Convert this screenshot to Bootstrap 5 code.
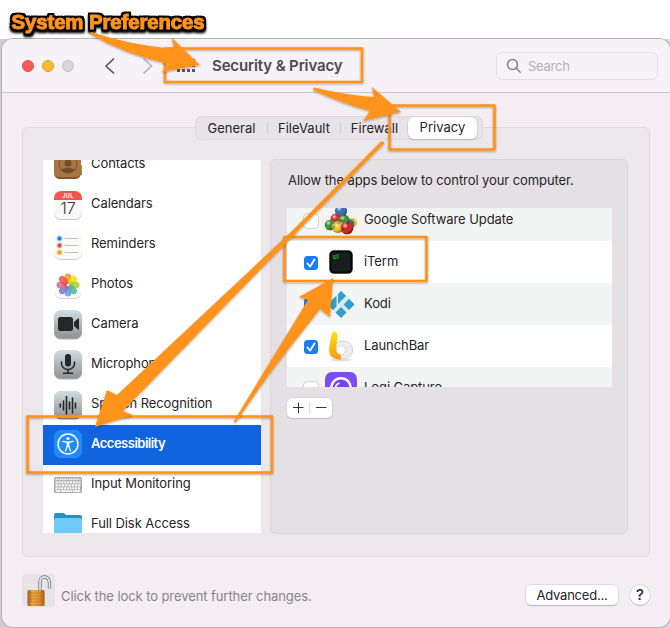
<!DOCTYPE html>
<html lang="en">
<head>
<meta charset="utf-8">
<title>Security &amp; Privacy</title>
<link href="https://cdn.jsdelivr.net/npm/bootstrap@5.3.0/dist/css/bootstrap.min.css" rel="stylesheet">
<style>
body{width:670px;height:628px;overflow:hidden;background:#fff;font-family:Inter,"Liberation Sans",sans-serif;font-size:13px;line-height:20px;letter-spacing:-.08px;color:#252427}
.caption-bar{height:39px}
.backdrop{height:589px;background:linear-gradient(90deg,#cfcdd2 0 50%,#d8d6da);padding-left:2px}
.mac-window{height:588px;background:#f4eef3;border-radius:11px;overflow:hidden;box-shadow:0 0 0 1px #b5b2b6}
.titlebar{height:54px;background:#f7f1f8;border-bottom:1px solid #cbc7cc;padding-left:20px;padding-right:12px}
.light{width:12px;height:12px;border-radius:50%;border:1px solid}
.light.red{background:#fb5b57;border-color:#e2504c}
.light.amber{background:#fcba2d;border-color:#e0a024}
.light.off{background:#d9d4da;border-color:#c5c0c6}
.title-text{font-size:15px;font-weight:600;color:#4d4a4f;letter-spacing:-.13px}
.search-box{width:162px;height:28px;border:1px solid #e4dfe5;border-radius:6px;color:#b6b1b7;letter-spacing:-.25px}
.search-box svg{margin-right:4px;margin-left:1px}
.pane{width:628px}
.tabs{height:22px;width:286px;background:#e8e3e8;border-radius:6px;box-shadow:0 0 0 1px #dfdadf;margin-left:174px;letter-spacing:.03px}
.tabs .sep{width:1px;height:12px;background:#cfcacf}
.tab-a{width:71px}.tab-b{width:72px}.tab-c{width:67px}
.tab-on{background:#fff;border-radius:6px;height:22px;width:69px;box-shadow:0 0 0 .5px #c9c5c9,0 1px 1px #aaa5aa}
.outer-panel{height:430px;margin-top:-12px;background:#ece7eb;border:1px solid #e0dbe0;border-radius:5px;padding:31px 21px 0 20px}
.side-list{width:218px;height:373px;background:#fff;overflow:hidden;margin-top:1px}
.side-row{height:40px;padding-left:10px;gap:8px;flex-shrink:0}
.side-row:first-child{margin-top:-15px}
.side-row svg{width:30px;height:30px;flex-shrink:0}
.side-row span{margin-top:-5px}
.side-row.on{background:#1064e0;color:#fff;font-weight:600;letter-spacing:-.5px}
.right-panel{width:358px;height:375px;background:#e5e0e4;border:1px solid #dad5d9;border-radius:5px;padding:10px 16px 0 16px}
.allow{padding-left:1px}
.app-list{width:325px;height:179px;overflow:hidden;background:#fff;margin-top:18px}
.app-row{height:42px;flex-shrink:0;padding-left:17px}
.app-row:first-child{margin-top:-9px}
.app-row:nth-child(odd){background:#f3f5f4}
.app-row svg{width:34px;height:34px;flex-shrink:0;margin-left:6px;margin-right:6px}
.app-row span{margin-top:-3px}
.tick{width:14px;height:14px;border-radius:3.5px;margin-top:1px;background:#fff;box-shadow:0 0 0 .6px #b9b9b9;flex-shrink:0}
.tick.yes{background:#1a7df8;box-shadow:none}
.app-row .tick svg{width:14px;height:14px;margin:0;display:block}
.pm{width:45px;height:20px;background:#fff;border-radius:5px;box-shadow:0 0 0 .5px #ccc6cb,0 1px 1px #b9b3b8;margin-top:11px}
footer{padding-top:17px}
.lock-box{width:33px;height:33px;background:#e8e3e8;border-radius:4px}
.hint{color:#87838a;padding:11px 0 0 6px}
.adv{width:92px;height:20px;background:#fff;border-radius:5px;box-shadow:0 0 0 .5px #ccc6cb,0 1px 1px #b3aeb2;letter-spacing:-.2px}
.help{width:20px;height:20px;border-radius:50%;background:#fff;box-shadow:0 0 0 .5px #ccc6cb,0 1px 1px #b3aeb2;font-size:15px;font-weight:500;margin-left:12px}
.marks{left:0;top:0;pointer-events:none}
</style>
<script src="https://cdn.jsdelivr.net/npm/bootstrap@5.3.0/dist/js/bootstrap.bundle.min.js"></script>
</head>
<body class="position-relative">
<div class="caption-bar"></div>
<div class="backdrop">
<main class="mac-window">
  <header class="titlebar d-flex align-items-center">
    <div class="d-flex gap-2">
      <i class="light red"></i><i class="light amber"></i><i class="light off"></i>
    </div>
    <svg class="ms-4" width="62" height="18" viewBox="0 0 62 18" fill="none" stroke-width="1.600" stroke-linecap="round" stroke-linejoin="round"><path d="M15.500 2 8 9l7.500 7" stroke="#514e53"/><path d="M46 2l7.500 7-7.500 7" stroke="#b4afb5"/></svg>
    <svg class="ms-3" width="20" height="18" viewBox="0 0 20 18" fill="#58555a"><g id="g"><path d="M1 2h3v3H1zM6 2h3v3H6zM11 2h3v3h-3zM16 2h3v3h-3z"/></g><use href="#g" y="5"/><use href="#g" y="10"/></svg>
    <div class="title-text ms-3 flex-grow-1">Security &amp; Privacy</div>
    <div class="search-box d-flex align-items-center ps-2">
      <svg width="18" height="16" viewBox="0 0 18 16" fill="none" stroke="#858086" stroke-width="1.500" stroke-linecap="round"><circle cx="6.500" cy="6.500" r="5"/><path d="M10.200 10.200l4 4"/></svg>Search
    </div>
  </header>
  <section class="pane pt-4 mx-auto">
    <div class="tabs d-flex align-items-center position-relative">
      <div class="text-center tab-a">General</div><i class="sep"></i>
      <div class="text-center tab-b">FileVault</div><i class="sep"></i>
      <div class="text-center tab-c">Firewall</div>
      <div class="tab-on text-center">Privacy</div>
    </div>
    <div class="outer-panel d-flex justify-content-between">
      <div class="side-list d-flex flex-column">
        <div class="side-row d-flex align-items-center"><svg viewBox="0 0 30 30"><path d="M27 4h2v5h-2z" fill="#6bbcf0"/><path d="M27 15h2v5h-2z" fill="#f38b1d"/><path d="M27 20h2v5h-2z" fill="#50b548"/><rect x="1" y="1" width="27" height="28" rx="6" fill="#a87542"/><path d="M1 22v1a6 6 0 006 6h15a6 6 0 006-6v-1q0 5-6 5H7q-6 0-6-5" fill="#83552b"/><circle cx="15" cy="14" r="9" fill="none" stroke="#70502f"/><circle cx="15" cy="13" r="3.500" fill="#70502f"/><path d="M8 20q7-5 14 0-7 5-14 0" fill="#70502f"/></svg><span>Contacts</span></div>
        <div class="side-row d-flex align-items-center"><svg viewBox="0 0 30 30"><rect x="1" y="2" width="28" height="28" rx="7" fill="#c9c9c9"/><rect x="1" y="1" width="28" height="28" rx="7" fill="#f8f8f7"/><path d="M1 10V8a7 7 0 017-7h14a7 7 0 017 7v2z" fill="#f4554e"/><text x="15" y="8.300" text-anchor="middle" font-size="5.500" font-weight="700" fill="#fff" font-family="Inter,sans-serif" letter-spacing=".4">JUL</text><text x="15" y="24" text-anchor="middle" font-size="16" font-weight="300" fill="#333" font-family="Inter,sans-serif">17</text></svg><span>Calendars</span></div>
        <div class="side-row d-flex align-items-center"><svg viewBox="0 0 30 30"><rect x="1" y="2" width="28" height="28" rx="7" fill="#cfcfcf"/><rect x="1" y="1" width="28" height="28" rx="7" fill="#fbfbfa"/><path d="M11.500 8.500h14M11.500 15.500h14M11.500 22.500h14" stroke="#c3c3c5"/><g fill="none" stroke-width="1.300"><circle cx="6.500" cy="8.500" r="2.300" stroke="#a8d2fb"/><circle cx="6.500" cy="15.500" r="2.300" stroke="#f8b3ae"/><circle cx="6.500" cy="22.500" r="2.300" stroke="#fbd49a"/></g><circle cx="6.500" cy="8.500" r="1.900" fill="#147efb"/><circle cx="6.500" cy="15.500" r="1.900" fill="#ee453d"/><circle cx="6.500" cy="22.500" r="1.900" fill="#fd9d1c"/></svg><span>Reminders</span></div>
        <div class="side-row d-flex align-items-center"><svg viewBox="0 0 30 30"><rect x="2" y="3" width="26" height="26" rx="6" fill="#cfcfcf"/><rect x="2" y="2" width="26" height="26" rx="6" fill="#fdfdfd"/><g transform="translate(15 15)" fill-opacity=".85"><rect x="-3.300" y="-11.500" width="6.600" height="10.500" rx="3.300" fill="#fc981c"/><rect x="-3.300" y="-11.500" width="6.600" height="10.500" rx="3.300" fill="#f1dd0b" transform="rotate(45)"/><rect x="-3.300" y="-11.500" width="6.600" height="10.500" rx="3.300" fill="#a3cf3a" transform="rotate(90)"/><rect x="-3.300" y="-11.500" width="6.600" height="10.500" rx="3.300" fill="#4eb884" transform="rotate(135)"/><rect x="-3.300" y="-11.500" width="6.600" height="10.500" rx="3.300" fill="#5d9fe0" transform="rotate(180)"/><rect x="-3.300" y="-11.500" width="6.600" height="10.500" rx="3.300" fill="#8a70c0" transform="rotate(225)"/><rect x="-3.300" y="-11.500" width="6.600" height="10.500" rx="3.300" fill="#cf6699" transform="rotate(270)"/><rect x="-3.300" y="-11.500" width="6.600" height="10.500" rx="3.300" fill="#f0503c" transform="rotate(315)"/></g></svg><span>Photos</span></div>
        <div class="side-row d-flex align-items-center"><svg viewBox="0 0 30 30"><defs><linearGradient id="gy" x2="0" y2="1"><stop stop-color="#cfdee5"/><stop offset="1" stop-color="#929190"/></linearGradient></defs><rect x="1" y="1.500" width="28" height="28" rx="6.500" fill="#aaa"/><rect x="1" y="0" width="28" height="28" rx="6.500" fill="url(#gy)"/><rect x="5" y="7" width="15" height="14" rx="2.500" fill="#252628"/><path d="M21 12l4-3.500q1-.5 1 .5v10q0 1-1 .5L21 16z" fill="#252628"/></svg><span>Camera</span></div>
        <div class="side-row d-flex align-items-center"><svg viewBox="0 0 30 30"><rect x="1" y="1.500" width="28" height="28" rx="6.500" fill="#aaa"/><rect x="1" y="0" width="28" height="28" rx="6.500" fill="url(#gy)"/><rect x="12" y="4" width="6" height="12.500" rx="3" fill="#252628"/><path d="M8.500 12v1.500a6.500 6 0 0013 0V12M15 19.500V23M10.500 23.300h9" stroke="#252628" stroke-width="1.600" fill="none" stroke-linecap="round"/></svg><span>Microphone</span></div>
        <div class="side-row d-flex align-items-center"><svg viewBox="0 0 30 30"><rect x="1" y="1.500" width="28" height="28" rx="6.500" fill="#aaa"/><rect x="1" y="1" width="28" height="28" rx="6.500" fill="url(#gy)"/><path d="M7.300 14v3M10.500 11v9M13.500 6.500V24M16.500 12v7M19.500 8v15M22.500 13v5" stroke="#252628" stroke-width="1.600" stroke-linecap="round"/></svg><span>Speech Recognition</span></div>
        <div class="side-row on d-flex align-items-center"><svg viewBox="0 0 30 30"><rect x="1" y="0" width="28" height="28" rx="6.500" fill="#1f8bfd"/><circle cx="15" cy="14" r="10" fill="none" stroke="#fff" stroke-width="1.500"/><circle cx="15" cy="8.600" r="1.500" fill="#fff"/><path d="M9.800 11.300l3.700.8h3l3.700-.8M14.200 12.300v4L12.500 21M15.800 12.300v4L17.500 21M15 12v4.500" stroke="#fff" stroke-width="1.200" fill="none" stroke-linecap="round" stroke-linejoin="round"/></svg><span>Accessibility</span></div>
        <div class="side-row d-flex align-items-center"><svg viewBox="0 0 30 30"><rect x="1" y="7" width="28" height="16" rx="1.500" fill="#aaa9a9"/><path d="M2.500 9.300h25" stroke="#f7f7f7" stroke-width="1.800" stroke-dasharray="1.600 .6"/><path d="M2.500 12.300h25" stroke="#f7f7f7" stroke-width="2.200" stroke-dasharray="2.200 .7"/><path d="M2.500 15.300h25" stroke="#f7f7f7" stroke-width="2.200" stroke-dasharray="2.500 .7"/><path d="M2.500 18.300h25" stroke="#f7f7f7" stroke-width="2.200" stroke-dasharray="2.100 .7"/><path d="M2.500 21.200h5M8.300 21.200h11M20 21.200h7.500" stroke="#f7f7f7" stroke-width="1.800"/></svg><span>Input Monitoring</span></div>
        <div class="side-row d-flex align-items-center"><svg viewBox="0 0 30 30"><path d="M1 5q0-2 2-2h7q1 0 2 1l1 1h14q2 0 2 2v20H1z" fill="#2592c4"/><rect x="1" y="8" width="28" height="21" rx="2" fill="#6fcaf7"/></svg><span>Full Disk Access</span></div>
      </div>
      <div class="right-panel">
        <div class="text-nowrap allow">Allow the apps below to control your computer.</div>
        <div class="app-list d-flex flex-column">
          <div class="app-row d-flex align-items-center"><i class="tick"></i><svg viewBox="0 0 34 34"><defs><radialGradient id="hl" cx=".35" cy=".3" r=".7"><stop stop-color="#fff" stop-opacity=".75"/><stop offset=".4" stop-color="#fff" stop-opacity="0"/><stop offset="1" stop-opacity=".4"/></radialGradient></defs><circle cx="17" cy="8" r="6" fill="#2f69b0"/><circle cx="12" cy="16" r="5.500" fill="#d02020"/><circle cx="28" cy="20" r="5" fill="#edc11d"/><circle cx="26" cy="21" r="4.500" fill="#2f69b0"/><circle cx="20" cy="17" r="5.500" fill="#3c8e28"/><circle cx="6" cy="22" r="5.300" fill="#3c8e28"/><circle cx="14" cy="24" r="6" fill="#f0ca1c"/><circle cx="23" cy="25" r="6.300" fill="#d51b1b"/><g fill="url(#hl)"><circle cx="17" cy="8" r="6"/><circle cx="12" cy="16" r="5.500"/><circle cx="20" cy="17" r="5.500"/><circle cx="6" cy="22" r="5.300"/><circle cx="14" cy="24" r="6"/><circle cx="23" cy="25" r="6.300"/></g></svg><span>Google Software Update</span></div>
          <div class="app-row d-flex align-items-center"><i class="tick yes"><svg viewBox="0 0 14 14"><path d="M3.500 7.500l2.600 3L10.500 3.500" fill="none" stroke="#fff" stroke-width="1.900" stroke-linecap="round" stroke-linejoin="round"/></svg></i><svg viewBox="0 0 34 34"><rect x="5" y="5" width="24" height="24" rx="5" fill="#9b9e9d"/><rect x="5.500" y="5.500" width="23" height="23" rx="4.500" fill="#050807"/><rect x="7.500" y="7.500" width="19" height="19" rx="3" fill="#161e20"/><text x="8.500" y="13.500" font-family="Liberation Mono,monospace" font-size="6" font-weight="700" fill="#27a52b">$</text><path d="M12.500 9h2v5h-2z" fill="#187a1d"/></svg><span>iTerm</span></div>
          <div class="app-row d-flex align-items-center"><i class="tick yes"></i><svg viewBox="0 0 34 34"><path d="M17 3L31 17 17 31 3 17z" fill="#dce8ec"/><path d="M17 4l5 5-8 8V7zM17 20l5.500 5.500L17 31l-5.500-5.500zM25 12l5.500 5.500L25 23l-5.500-5.500zM12.500 9v10.500L9 23l-6-6z" fill="#2f9fcb"/></svg><span>Kodi</span></div>
          <div class="app-row d-flex align-items-center"><i class="tick yes"><svg viewBox="0 0 14 14"><path d="M3.500 7.500l2.600 3L10.500 3.500" fill="none" stroke="#fff" stroke-width="1.900" stroke-linecap="round" stroke-linejoin="round"/></svg></i><svg viewBox="0 0 34 34"><defs><linearGradient id="lb" x2="0" y2="1"><stop stop-color="#ffe20c"/><stop offset="1" stop-color="#f89a13"/></linearGradient></defs><ellipse cx="17" cy="31" rx="11" ry="1.400" fill="#e2e2e2"/><ellipse cx="19" cy="21" rx="9.700" ry="9" fill="#eee" stroke="#c9c9c9" stroke-width=".8"/><path d="M11 2.500q3.500 1 2.300 8-1 5-1 8.500 1 6 4.700 6.500v5q-7 .5-10.500-4-2.500-5-.5-12 1-7 2-9.500 1-3 3-2.500z" fill="url(#lb)"/><ellipse cx="17" cy="21" rx="4.600" ry="4.400" fill="#fff" stroke="#d0d0d0" stroke-width=".8"/></svg><span>LaunchBar</span></div>
          <div class="app-row d-flex align-items-center"><i class="tick"></i><svg viewBox="0 0 34 34"><rect x="1" y="1" width="32" height="32" rx="7" fill="#7c4cf4"/><circle cx="17" cy="17" r="11" fill="#fff"/><circle cx="17" cy="17" r="8.500" fill="#7842f0"/><path d="M11.500 17a5.500 5.500 0 014-5" stroke="#fff" stroke-width="1.500" fill="none"/></svg><span>Logi Capture</span></div>
        </div>
        <div class="pm d-flex align-items-center"><svg width="45" height="20" viewBox="0 0 45 20" stroke="#353336" stroke-width="1.100"><path d="M6 9.500h10.500M11.500 4.500v10.500M29 9.500h10.500"/><path d="M22.500 4v12" stroke="#dcd8dc" stroke-width="1"/></svg></div>
      </div>
    </div>
    <footer class="d-flex align-items-center">
      <div class="lock-box"><svg width="33" height="33" viewBox="0 0 33 33"><defs><linearGradient id="gd"><stop stop-color="#a45c16"/><stop offset=".3" stop-color="#efa63c"/><stop offset=".7" stop-color="#e0912c"/><stop offset="1" stop-color="#a35a12"/></linearGradient></defs><path d="M18 17V8.500q0-5.500 4.500-5.500T27.500 9v5.500" fill="none" stroke="#68757d" stroke-width="3.300"/><path d="M18 17V8.500q0-5.500 4.500-5.500T27.500 9v5.500" fill="none" stroke="#dbe4e9" stroke-width="1.800"/><rect x="5.500" y="16" width="17" height="16" rx="1.500" fill="url(#gd)"/><path d="M6 19h16.500M6 22h16.500M6 25h16.500M6 28h16.500M6 31h16.500" stroke="#a8610f" stroke-opacity=".5" stroke-width=".8"/></svg></div>
      <div class="flex-grow-1 hint">Click the lock to prevent further changes.</div>
      <div class="adv text-center mt-2">Advanced...</div>
      <div class="help text-center mt-2">?</div>
    </footer>
  </section>
</main>
</div>
<svg class="marks position-absolute" width="670" height="628" viewBox="0 0 670 628">
  <defs><filter id="sh" x="-10%" y="-10%" width="120%" height="130%"><feDropShadow dx="0" dy="1" stdDeviation="1" flood-color="#000" flood-opacity=".35"/></filter>
  <filter id="ts" x="-5%" y="-20%" width="110%" height="150%"><feMorphology in="SourceAlpha" operator="dilate" radius="1.500"/><feGaussianBlur stdDeviation=".4" result="o"/><feOffset in="o" dy="1.500"/><feGaussianBlur stdDeviation="1" result="s"/><feMerge><feMergeNode in="s"/><feMergeNode in="o"/><feMergeNode in="o"/><feMergeNode in="SourceGraphic"/></feMerge></filter></defs>
  <text x="11.500" y="29" font-family="Liberation Sans,Arial,sans-serif" font-size="20.500" font-weight="700" fill="#ff931e" stroke="#ff931e" stroke-width=".7" textLength="193" lengthAdjust="spacingAndGlyphs" filter="url(#ts)">System Preferences</text>
  <g fill="none" stroke="#ff931e" stroke-width="2.700" stroke-linejoin="round" filter="url(#sh)">
    <rect x="165" y="48.500" width="197" height="33.500"/>
    <rect x="389.500" y="105.500" width="105" height="44"/>
    <rect x="284.500" y="237" width="142" height="44"/>
    <rect x="27.500" y="416.500" width="244.500" height="56"/>
  </g>
  <g fill="#ff931e" filter="url(#sh)">
    <path d="M91 32Q130 45 174 49L172 38 200 65 162 72 168 64Q124 54 90 34z"/>
    <path d="M314 87.500Q345 95 374 97L372 87 401 112 363 121 370 111Q343 104 313 90z"/>
    <path d="M381 141.500Q384 140.500 384 143.500L296 233 153 380 123 411 133 415 95 427 107 390 117 395 133 380 293 230z"/>
    <path d="M234 421Q233 423 236 422L270 373 320 309 330 317 333 278 299 297 308 300 270 362z"/>
  </g>
</svg>
</body>
</html>
